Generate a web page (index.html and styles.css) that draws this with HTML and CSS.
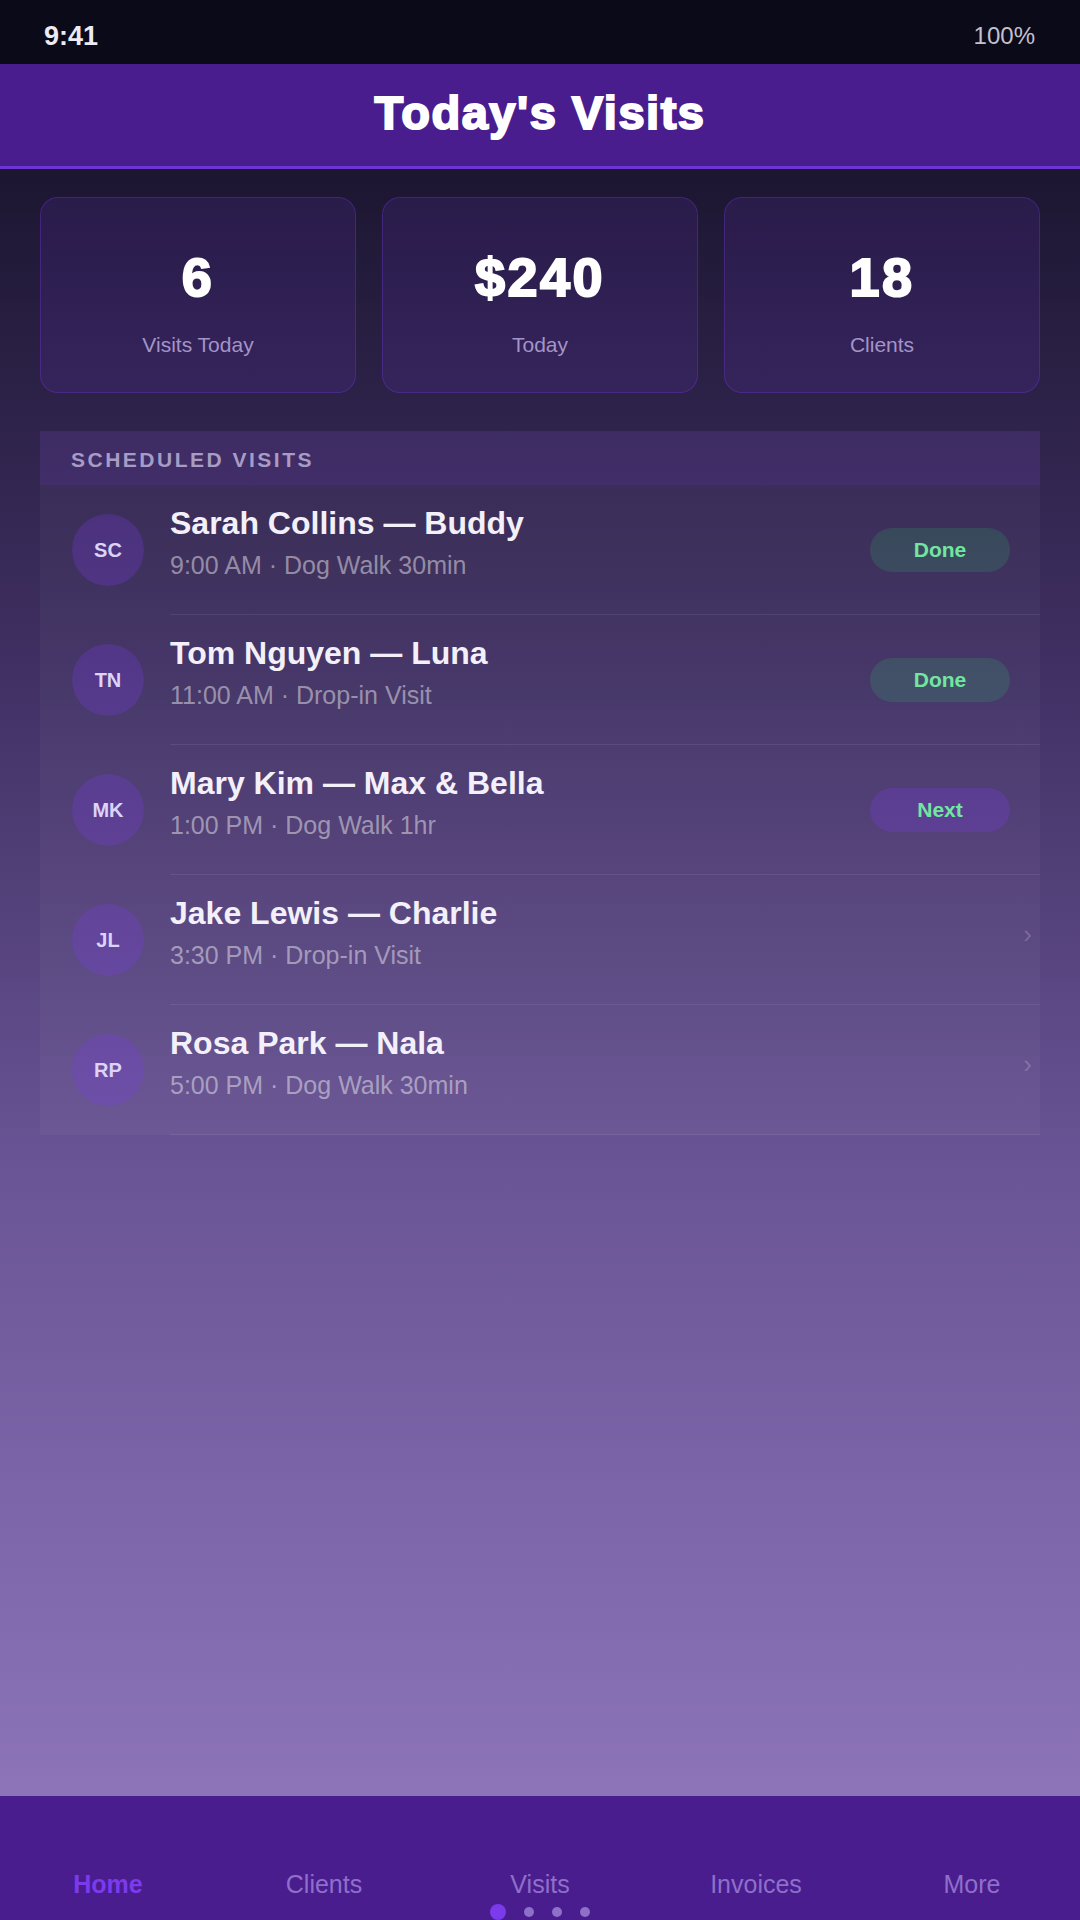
FILE: index.html
```html
<!DOCTYPE html>
<html lang="en">
<head>
    <meta charset="UTF-8">
    <meta name="viewport" content="width=device-width, initial-scale=1.0">
    <title>Today's Visits</title>
    <link rel="stylesheet" href="styles.css">
</head>
<body>
    <div class="phone">
        <!-- Status bar -->
        <div class="status-bar">
            <span class="time">9:41</span>
            <span class="battery">100%</span>
        </div>

        <header class="app-header">
            <h1>Today's Visits</h1>
        </header>

        <main class="content">
            <!-- Summary cards -->
            <section class="stats">
                <div class="stat-card">
                    <div class="stat-value">6</div>
                    <div class="stat-label">Visits Today</div>
                </div>
                <div class="stat-card">
                    <div class="stat-value">$240</div>
                    <div class="stat-label">Today</div>
                </div>
                <div class="stat-card">
                    <div class="stat-value">18</div>
                    <div class="stat-label">Clients</div>
                </div>
            </section>

            <!-- Visit list -->
            <section class="visit-list">
                <div class="list-header">Scheduled Visits</div>
                <ul class="visits">
                    <li class="visit">
                        <div class="avatar">SC</div>
                        <div class="visit-info">
                            <div class="visit-name">Sarah Collins — Buddy</div>
                            <div class="visit-meta">9:00 AM · Dog Walk 30min</div>
                        </div>
                        <span class="pill done">Done</span>
                    </li>
                    <li class="visit">
                        <div class="avatar">TN</div>
                        <div class="visit-info">
                            <div class="visit-name">Tom Nguyen — Luna</div>
                            <div class="visit-meta">11:00 AM · Drop-in Visit</div>
                        </div>
                        <span class="pill done">Done</span>
                    </li>
                    <li class="visit">
                        <div class="avatar">MK</div>
                        <div class="visit-info">
                            <div class="visit-name">Mary Kim — Max &amp; Bella</div>
                            <div class="visit-meta">1:00 PM · Dog Walk 1hr</div>
                        </div>
                        <span class="pill next">Next</span>
                    </li>
                    <li class="visit">
                        <div class="avatar">JL</div>
                        <div class="visit-info">
                            <div class="visit-name">Jake Lewis — Charlie</div>
                            <div class="visit-meta">3:30 PM · Drop-in Visit</div>
                        </div>
                        <span class="chevron">›</span>
                    </li>
                    <li class="visit">
                        <div class="avatar">RP</div>
                        <div class="visit-info">
                            <div class="visit-name">Rosa Park — Nala</div>
                            <div class="visit-meta">5:00 PM · Dog Walk 30min</div>
                        </div>
                        <span class="chevron">›</span>
                    </li>
                </ul>
            </section>
        </main>

        <!-- Bottom navigation -->
        <nav class="tab-bar">
            <div class="tabs">
                <a class="tab active">Home</a>
                <a class="tab">Clients</a>
                <a class="tab">Visits</a>
                <a class="tab">Invoices</a>
                <a class="tab">More</a>
            </div>
            <div class="page-dots">
                <span class="dot current"></span>
                <span class="dot"></span>
                <span class="dot"></span>
                <span class="dot"></span>
            </div>
        </nav>
    </div>
</body>
</html>
```

FILE: styles.css
```css
* {
    box-sizing: border-box;
}

body {
    margin: 0;
    font-family: "Liberation Sans", Arial, sans-serif;
    background-color: #0b0a18;
    color: #f3f0fa;
}

.phone {
    width: 1080px;
    height: 1920px;
    display: flex;
    flex-direction: column;
    overflow: hidden;
}

/* Status bar */
.status-bar {
    height: 64px;
    flex-shrink: 0;
    display: flex;
    justify-content: space-between;
    align-items: center;
    padding: 8px 45px 0 44px;
    background-color: #0b0a18;
}

.time {
    font-size: 27px;
    font-weight: bold;
    color: #eceaf2;
}

.battery {
    font-size: 24px;
    color: #c4c0d0;
}

/* Header */
.app-header {
    height: 105px;
    flex-shrink: 0;
    display: flex;
    align-items: center;
    justify-content: center;
    padding-bottom: 6px;
    background-color: #4a1d8f;
    border-bottom: 3px solid #6d35d6;
}

/* heavy headline: bold face plus a thin stroke */
.app-header h1 {
    margin: 0;
    font-size: 47px;
    font-weight: bold;
    letter-spacing: 1.5px;
    color: #fff;
    -webkit-text-stroke: 2px #fff;
}

/* Main area */
.content {
    flex: 1;
    padding: 28px 40px 0;
    background: linear-gradient(180deg, #1c1631 0%, #3f2f62 30%, #6a5596 62%, #8d74b9 100%);
}

.stats {
    display: grid;
    grid-template-columns: repeat(3, 1fr);
    gap: 26px;
}

.stat-card {
    height: 196px;
    display: flex;
    flex-direction: column;
    align-items: center;
    padding-top: 50px;
    background-color: rgba(124, 58, 237, 0.12);
    border: 1px solid rgba(124, 58, 237, 0.3);
    border-radius: 18px;
}

.stat-value {
    font-size: 54px;
    font-weight: bold;
    line-height: 1.1;
    letter-spacing: 2.5px;
    color: #fff;
    -webkit-text-stroke: 2px #fff;
}

.stat-label {
    margin-top: 25px;
    font-size: 21px;
    line-height: 1.2;
    color: #a394c8;
}

/* Visit list */
.visit-list {
    margin-top: 38px;
    background-color: rgba(255, 255, 255, 0.035);
}

.list-header {
    height: 54px;
    display: flex;
    align-items: center;
    padding: 3px 0 0 31px;
    font-size: 21px;
    font-weight: bold;
    letter-spacing: 2.5px;
    text-transform: uppercase;
    color: #a89cc4;
    background-color: rgba(124, 58, 237, 0.12);
}

.visits {
    list-style-type: none;
    margin: 0;
    padding: 0;
}

.visit {
    height: 130px;
    display: flex;
    align-items: center;
    padding-left: 32px;
    position: relative;
}

/* separator starts after the avatar */
.visit::after {
    content: "";
    position: absolute;
    left: 130px;
    right: 0;
    bottom: 0;
    height: 1px;
    background-color: rgba(255, 255, 255, 0.08);
}

.avatar {
    width: 72px;
    height: 72px;
    flex-shrink: 0;
    border-radius: 50%;
    display: flex;
    align-items: center;
    justify-content: center;
    background-color: rgba(124, 58, 237, 0.25);
    color: #dcd3f7;
    font-size: 20px;
    font-weight: bold;
}

.visit-info {
    flex: 1;
    margin-left: 26px;
    padding-bottom: 16px;
}

.visit-name {
    font-size: 32px;
    font-weight: bold;
    line-height: 1.2;
    color: #f3f0fa;
}

.visit-meta {
    margin-top: 8px;
    font-size: 25px;
    line-height: 1.2;
    color: rgba(255, 255, 255, 0.45);
}

.pill {
    width: 140px;
    height: 44px;
    margin-right: 30px;
    border-radius: 22px;
    display: flex;
    align-items: center;
    justify-content: center;
    font-size: 21px;
    font-weight: bold;
    color: #72e6a0;
}

.pill.done {
    background-color: rgba(40, 200, 100, 0.17);
}

.pill.next {
    background-color: rgba(124, 58, 237, 0.25);
}

.chevron {
    margin-right: 8px;
    margin-bottom: 12px;
    font-size: 26px;
    color: rgba(255, 255, 255, 0.2);
}

/* Bottom navigation */
.tab-bar {
    height: 124px;
    flex-shrink: 0;
    display: flex;
    flex-direction: column;
    justify-content: flex-end;
    background-color: #4a1d8f;
}

.tabs {
    display: grid;
    grid-template-columns: repeat(5, 1fr);
}

.tab {
    text-align: center;
    font-size: 25px;
    line-height: 30px;
    color: #8e6fc9;
}

.tab.active {
    font-weight: bold;
    color: #7c3aed;
}

.page-dots {
    height: 21px;
    display: flex;
    justify-content: center;
    align-items: center;
    gap: 18px;
    padding-top: 5px;
}

.dot {
    width: 10px;
    height: 10px;
    border-radius: 50%;
    background-color: #8e6fc9;
}

.dot.current {
    width: 16px;
    height: 16px;
    background-color: #7c3aed;
}
```
